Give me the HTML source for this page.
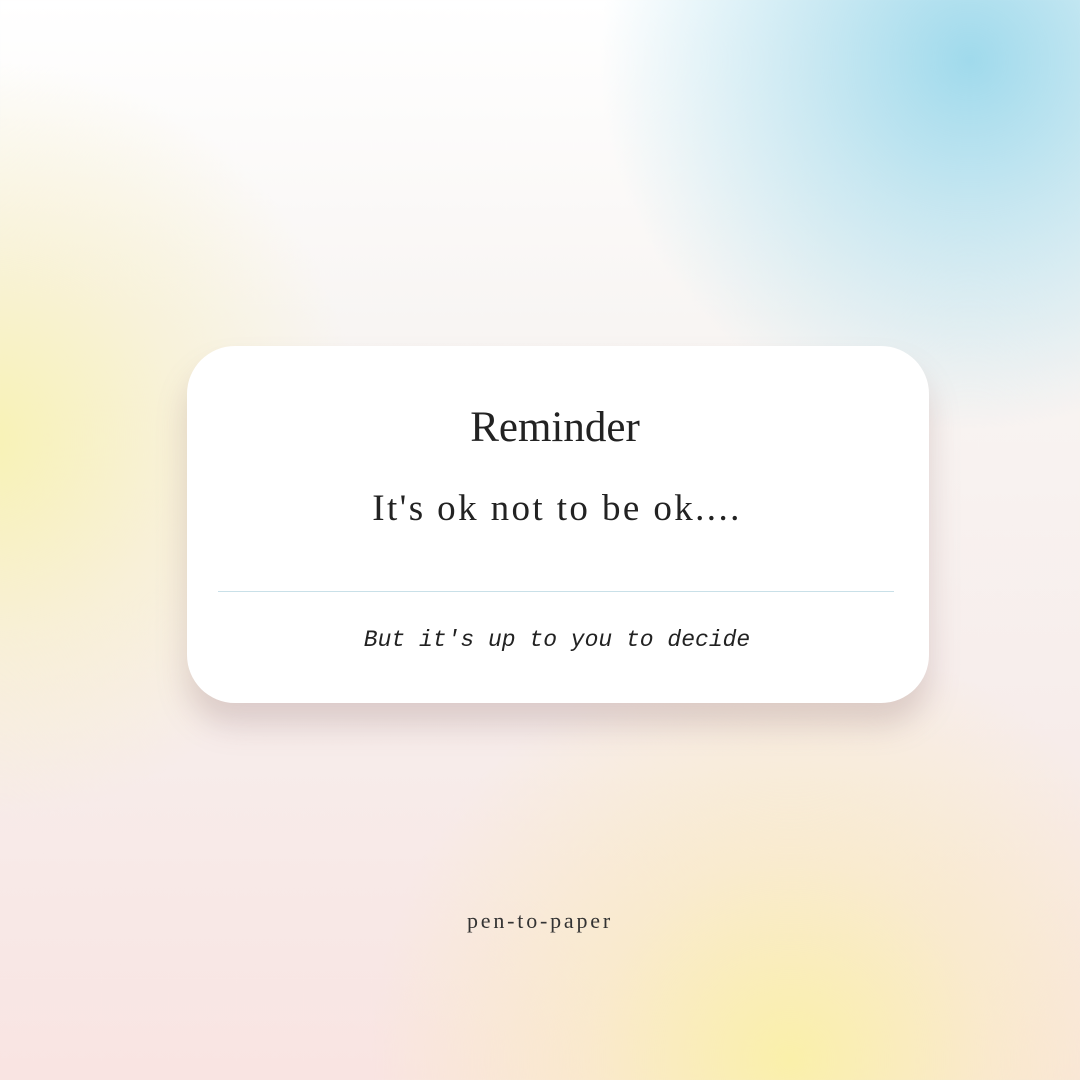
<!DOCTYPE html>
<html><head><meta charset="utf-8"><style>
html,body{margin:0;padding:0}
body{width:1080px;height:1080px;position:relative;overflow:hidden;
background:
radial-gradient(circle at 970px 60px, rgba(160,218,236,1) 0, rgba(180,224,238,0.7) 160px, rgba(200,230,240,0) 370px),
radial-gradient(circle at 790px 1060px, rgba(250,240,170,1) 0, rgba(250,236,190,0.6) 200px, rgba(250,230,210,0) 420px),
radial-gradient(circle at -20px 440px, rgba(248,242,180,1) 0, rgba(248,240,200,0.6) 200px, rgba(248,240,210,0) 380px),
linear-gradient(180deg,#ffffff 0%,#f8f5f3 30%,#f7ecea 70%,#f9e4e2 100%);}
.card{position:absolute;left:187px;top:346px;width:742px;height:357px;background:#fff;border-radius:48px;box-shadow:0 22px 30px rgba(150,120,120,0.28)}
.t1{position:absolute;top:403px;left:0;width:1110px;text-align:center;font-family:"Liberation Serif",serif;font-size:43px;color:#222;}
.t2{position:absolute;top:487px;left:0;width:1114px;text-align:center;font-family:"Liberation Serif",serif;font-size:37px;letter-spacing:2.4px;color:#222;}
.line{position:absolute;left:218px;top:591px;width:676px;height:1px;background:#c9e0e8}
.t3{position:absolute;top:627px;left:0;width:1114px;text-align:center;font-family:"Liberation Mono",monospace;font-style:italic;font-size:23px;color:#222}
.t4{position:absolute;top:908px;left:0;width:1080px;text-align:center;font-family:"Liberation Serif",serif;font-size:22px;letter-spacing:2.8px;color:#333}
</style></head><body>
<div class="card"></div>
<div class="t1">Reminder</div>
<div class="t2">It's ok not to be ok....</div>
<div class="line"></div>
<div class="t3">But it's up to you to decide</div>
<div class="t4">pen-to-paper</div>
</body></html>
